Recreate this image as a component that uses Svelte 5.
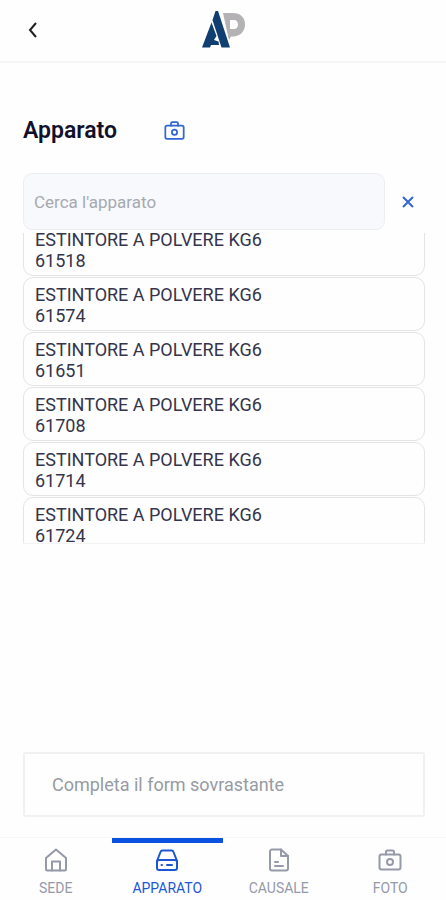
<script lang="ts">
	type Device = { name: string; code: string };
	type Tab = { id: string; label: string };

	const devices: Device[] = [
		{ name: 'ESTINTORE A POLVERE KG6', code: '61518' },
		{ name: 'ESTINTORE A POLVERE KG6', code: '61574' },
		{ name: 'ESTINTORE A POLVERE KG6', code: '61651' },
		{ name: 'ESTINTORE A POLVERE KG6', code: '61708' },
		{ name: 'ESTINTORE A POLVERE KG6', code: '61714' },
		{ name: 'ESTINTORE A POLVERE KG6', code: '61724' }
	];

	const tabs: Tab[] = [
		{ id: 'sede', label: 'SEDE' },
		{ id: 'apparato', label: 'APPARATO' },
		{ id: 'causale', label: 'CAUSALE' },
		{ id: 'foto', label: 'FOTO' }
	];

	let search = $state('');
	let active = $state('apparato');
	let list: HTMLUListElement;

	let filtered = $derived(
		devices.filter((d) => `${d.name} ${d.code}`.toLowerCase().includes(search.toLowerCase()))
	);

	// Start slightly scrolled, so it is clear that the list moves
	$effect(() => {
		list.scrollTop = 11;
	});
</script>

{#snippet camera()}
	<rect x="1.5" y="6.5" width="21" height="15" rx="2" />
	<path d="M8 6.5V4a1.500 1.500 0 0 1 1.500-1.500h5A1.500 1.500 0 0 1 16 4v2.500" />
	<circle cx="12" cy="14" r="3" />
{/snippet}

<div class="app">
	<header class="topbar">
		<button class="back" aria-label="Indietro">
			<svg width="12" height="20" viewBox="0 0 12 20">
				<path d="M10 3 4 10l6 7" />
			</svg>
		</button>
		<svg class="logo" width="44" height="38" viewBox="0 0 44 38" role="img" aria-label="AP">
			<path
				fill="#b4b2b4"
				fill-rule="evenodd"
				d="M22 2h10c7.500 0 12 4.500 12 11.500S39 25.500 32 25.500h-2l-2 3.500zM29 9v9h4c2.500 0 4-2 4-4.500S35.500 9 33 9z"
			/>
			<path fill="#113e70" d="M14.500 0h2.500L29 36.500h-8.500L11.500 9z" />
			<path
				fill="#113e70"
				d="M10.500 11.500 15.500 25l-2.500 4 4.500 1.500L18 34H10l-1 2.500H1z"
			/>
		</svg>
	</header>

	<main class="content">
		<div class="heading">
			<h1>Apparato</h1>
			<button class="scan" aria-label="Scansiona apparato">
				<svg class="line-icon" width="21" height="21" viewBox="0 0 24 24">
					{@render camera()}
				</svg>
			</button>
		</div>

		<div class="search">
			<input type="text" placeholder="Cerca l'apparato" aria-label="Cerca l'apparato" bind:value={search} />
			<button class="clear" aria-label="Cancella ricerca" onclick={() => (search = '')}>
				<svg width="14" height="14" viewBox="0 0 14 14">
					<path d="m2 2 10 10M12 2 2 12" />
				</svg>
			</button>
		</div>

		<ul class="devices" bind:this={list}>
			{#each filtered as device (device.code)}
				<li>
					<button class="device">
						<span>{device.name}</span>
						<span>{device.code}</span>
					</button>
				</li>
			{/each}
		</ul>

		<button class="submit">Completa il form sovrastante</button>
	</main>

	<nav class="tabs">
		{#each tabs as tab (tab.id)}
			<button class="tab" class:active={active === tab.id} onclick={() => (active = tab.id)}>
				<svg class="line-icon" width="24" height="24" viewBox="0 0 24 24">
					{#if tab.id === 'sede'}
						<path d="M2 10 12 1.500 22 10v11a1.500 1.500 0 0 1-1.500 1.500h-17A1.500 1.500 0 0 1 2 21z" />
						<path d="M8 22.500v-9h8v9" />
					{:else if tab.id === 'apparato'}
						<path d="m2 13 3.500-9A2 2 0 0 1 7.500 2.500h9a2 2 0 0 1 2 1.500L22 13" />
						<rect x="2" y="12" width="20" height="10" rx="2" />
						<path d="M6.500 17h.5M12 17h5" />
					{:else if tab.id === 'causale'}
						<path d="M14 1.500H5A2 2 0 0 0 3 3.500v17a2 2 0 0 0 2 2h14a2 2 0 0 0 2-2V8z" />
						<path d="M14 1.500V8h7M8 14h3M8 18h8" />
					{:else}
						{@render camera()}
					{/if}
				</svg>
				<span>{tab.label}</span>
			</button>
		{/each}
	</nav>
</div>

<style>
	:global(body) {
		margin: 0;
		background: #fefefe;
	}

	.app {
		display: flex;
		flex-direction: column;
		min-height: 100vh;
		font-family: Roboto, sans-serif;
		color: #34344a;
	}

	button {
		padding: 0;
		border: none;
		background: none;
		font: inherit;
		color: inherit;
		cursor: pointer;
	}

	button svg {
		display: block;
		fill: none;
		stroke: currentColor;
		stroke-width: 2;
	}

	.line-icon {
		stroke-linecap: round;
		stroke-linejoin: round;
	}

	.topbar {
		display: grid;
		grid-template-columns: 1fr auto 1fr;
		align-items: center;
		height: 60px;
		padding: 1px 24px 0;
		border-bottom: 2px solid #f6f6f7;
	}

	.back {
		justify-self: start;
		padding: 0 2px 2px;
		color: #202024;
	}

	.logo {
		margin-bottom: 2px;
	}

	.content {
		display: flex;
		flex: 1;
		flex-direction: column;
		padding: 51px 21px 20px 23px;
	}

	.heading {
		display: flex;
		align-items: center;
		gap: 47px;
		height: 32px;
		margin-bottom: 27px;
	}

	h1 {
		margin: 0;
		font-size: 23px;
		font-weight: 600;
		color: #11112b;
	}

	.scan,
	.clear {
		color: #3266d5;
	}

	.search {
		display: flex;
		align-items: center;
		gap: 16px;
		margin-bottom: 3px;
	}

	.search input {
		flex: 1;
		min-width: 0;
		box-sizing: border-box;
		height: 57px;
		padding: 0 10px;
		border: 1px solid #eceef2;
		border-radius: 9px;
		background: #f7f9fd;
		font: inherit;
		font-size: 17px;
		color: #34344a;
	}

	.search input::placeholder {
		color: #a6a9b0;
	}

	.clear {
		padding: 0 10px 0 0;
	}

	.devices {
		height: 310px;
		margin: 0;
		padding: 0;
		overflow-y: auto;
		list-style: none;
		scrollbar-width: none;
		border-bottom: 1px solid #f3f3f4;
	}

	.device {
		display: flex;
		flex-direction: column;
		box-sizing: border-box;
		width: 100%;
		height: 54px;
		margin-bottom: 1px;
		padding: 6px 11px;
		border: 1px solid #e4e4e7;
		border-radius: 10px;
		font-size: 18px;
		line-height: 21px;
		text-align: left;
	}

	.submit {
		margin-top: auto;
		padding: 20px 27px;
		border: 2px solid #f1f1f2;
		border-radius: 2px;
		font-size: 18px;
		line-height: 21px;
		text-align: left;
		color: #979ba3;
	}

	.tabs {
		display: grid;
		grid-template-columns: repeat(4, 1fr);
		border-top: 1px solid #f6f6f7;
	}

	.tab {
		display: flex;
		flex-direction: column;
		align-items: center;
		gap: 8px;
		padding: 5px 0 4px;
		border-top: 5px solid transparent;
		font-size: 14px;
		line-height: 16px;
		color: #9599a8;
	}

	.tab.active {
		border-top-color: #0b52e0;
		color: #1c56d8;
	}
</style>
